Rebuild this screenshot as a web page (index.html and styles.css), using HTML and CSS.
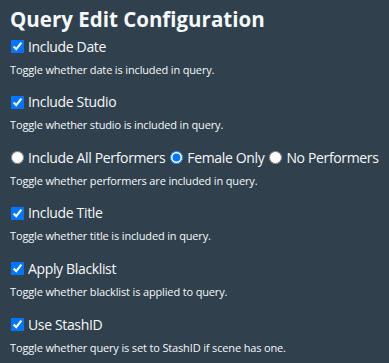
FILE: index.html
```html
<!DOCTYPE html>
<html lang="en">
<head>
    <meta charset="UTF-8">
    <meta name="viewport" content="width=device-width, initial-scale=1.0">
    <title>Query Edit Configuration</title>
    <link rel="stylesheet" href="styles.css">
</head>
<body>

    <div class="config">
        <h3 class="config-title">Query Edit Configuration</h3>

        <div class="option">
            <label class="check"><input type="checkbox" checked> Include Date</label>
            <small class="option-help">Toggle whether date is included in query.</small>
        </div>

        <div class="option">
            <label class="check"><input type="checkbox" checked> Include Studio</label>
            <small class="option-help">Toggle whether studio is included in query.</small>
        </div>

        <div class="option">
            <div class="radios">
                <label class="check"><input type="radio" name="performers"> Include All Performers</label>
                <label class="check"><input type="radio" name="performers" checked> Female Only</label>
                <label class="check"><input type="radio" name="performers"> No Performers</label>
            </div>
            <small class="option-help">Toggle whether performers are included in query.</small>
        </div>

        <div class="option">
            <label class="check"><input type="checkbox" checked> Include Title</label>
            <small class="option-help">Toggle whether title is included in query.</small>
        </div>

        <div class="option">
            <label class="check"><input type="checkbox" checked> Apply Blacklist</label>
            <small class="option-help">Toggle whether blacklist is applied to query.</small>
        </div>

        <div class="option">
            <label class="check"><input type="checkbox" checked> Use StashID</label>
            <small class="option-help">Toggle whether query is set to StashID if scene has one.</small>
        </div>
    </div>

</body>
</html>
```

FILE: styles.css
```css
/* General styles */
body {
    margin: 0;
    background-color: #30404d;
    color: #f5f8fa;
    font-family: "Open Sans", "Noto Sans", sans-serif;
}

.config {
    padding: 7px 10px;
}

.config-title {
    margin: 0 0 5px;
    font-size: 20.5px;
    font-weight: 700;
    line-height: 1.2;
}

.option {
    margin-bottom: 15.6px;
    font-size: 14px;
    line-height: 20px;
}

.radios {
    display: flex;
    gap: 4px;
    white-space: nowrap;
}

.check {
    display: flex;
    align-items: center;
    letter-spacing: -0.35px;
}

.check input {
    margin: 0 4px 0 1px;
    width: 13px;
    height: 13px;
}

.option-help {
    display: block;
    margin-top: 6px;
    font-size: 11px;
    letter-spacing: -0.15px;
    line-height: 14px;
}
```
